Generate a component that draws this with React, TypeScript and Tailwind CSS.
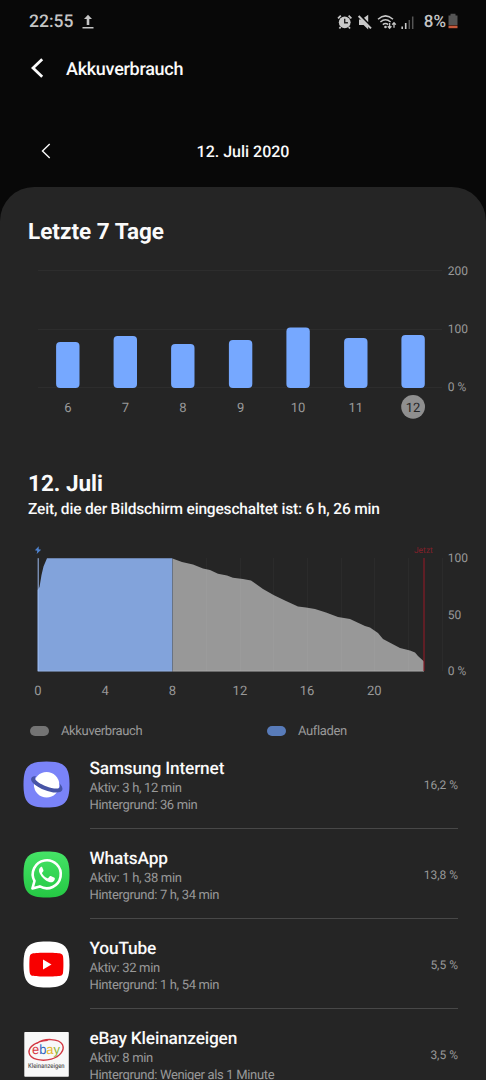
import type { ReactNode } from "react";

const DAYS = [
  { day: "6", x: 67.8, top: 342 },
  { day: "7", x: 125.3, top: 336 },
  { day: "8", x: 182.8, top: 344 },
  { day: "9", x: 240.6, top: 340 },
  { day: "10", x: 298.1, top: 327.5 },
  { day: "11", x: 355.8, top: 338 },
  { day: "12", x: 413.1, top: 335, active: true },
];

function StatusIcons() {
  return (
    <svg width="78" height="20" viewBox="0 0 78 20" fill="none" stroke="#c9c9c9">
      {/* alarm */}
      <circle cx="7.7" cy="10.3" r="5.9" fill="#c9c9c9" stroke="none" />
      <path d="M1 6.4 3.8 3.6M14.4 6.4 11.6 3.6M3.6 15l-1.2 1.6M11.8 15l1.2 1.6" strokeWidth="1.7" />
      <path d="M7.7 6.7v4h3.2" stroke="#222" strokeWidth="1.4" />
      {/* muted */}
      <path d="M22 7.6h2.8l1.4 1.3 5 5.2v3.5L26.6 13H22ZM27 5.8l4.2-3v7.4Z" fill="#c9c9c9" stroke="none" />
      <path d="m21.6 4 12.4 12.4" strokeWidth="2" />
      {/* wifi */}
      <path d="M41 7.2q7.5-6.6 15 0M43.4 10q5.1-4.4 10.2 0M45.8 12.6q2.7-2.2 5.4 0" strokeWidth="1.5" />
      <circle cx="48.5" cy="15" r="1.3" fill="#c9c9c9" stroke="none" />
      <path d="M52.6 11v5M50.8 14.3l1.8 2 1.8-2M57 15.8v-5M55.2 12.6l1.8-2 1.8 2" strokeWidth="1.3" />
      {/* signal */}
      <path d="M65.2 14.6v2.4M68.7 11v6" strokeWidth="1.6" />
      <path d="M72.3 8v9M75.7 4.4V17" stroke="#555" strokeWidth="1.5" />
    </svg>
  );
}

function WeekChart() {
  return (
    <svg className="block" width="486" height="165" viewBox="0 260 486 165" fontFamily="Roboto, sans-serif">
      <path d="M38 270.5h404M38 329.5h404M38 387.5h404" stroke="#2d2d2d" />
      {DAYS.map((d) => (
        <g key={d.day}>
          <rect x={d.x - 11.7} y={d.top} width="23.4" height={388 - d.top} rx="4" fill="#76a8ff" />
          {d.active && <circle cx={d.x} cy="406.8" r="11.9" fill="#8f8f8f" />}
          <text x={d.x} y="411.8" textAnchor="middle" fontSize="13" fill={d.active ? "#252525" : "#999"}>
            {d.day}
          </text>
        </g>
      ))}
      <g fontSize="12" fill="#999">
        <text x="447.7" y="274.8">200</text>
        <text x="447.7" y="333.2">100</text>
        <text x="447.7" y="391.3">0 %</text>
      </g>
    </svg>
  );
}

function DayChart() {
  return (
    <svg className="block" width="486" height="165" viewBox="0 540 486 165" fontFamily="Roboto, sans-serif">
      <path
        d="M172.5 558.5 182 562 193 564.5 203 568.5 210 570 218 573.7 227 575.5 233 577.7 243 579 251 580.5 256 584 263 589 274 595.3 286 601 298 606.5 306 607.5 315 609 326 612.5 338 617 350 619 358 622.7 365 626 370 627.5 378 633 380.5 636 383 639 391 643.3 400 648 410 650.5 415 652.5 418 656 424 661.5V671.5H172.5Z"
        fill="#989898"
      />
      <path d="M37.7 671.5V590L39.5 587 41.5 575 43.5 566.5 47 558.2H172.3V671.5Z" fill="#82a3db" />
      <path d="M38.2 558.2V671" stroke="#9dbcf0" />
      <path d="M206.5 558v113M240.5 558v113M273.5 558v113M307.5 558v113M341.5 558v113M374.5 558v113M408.5 558v113M442.5 558v113" stroke="#fff" strokeOpacity="0.03" />
      <path d="M37.7 671H424" stroke="#fff" strokeOpacity="0.15" />
      <path d="M424 558v113" stroke="#871c27" strokeWidth="1.2" />
      <path d="m38.8 546.3-3.9 4 2.4.5-.6 3.3 4.4-4.4-2.5-.5Z" fill="#4f83cf" />
      <text x="423.4" y="552.8" textAnchor="middle" fontSize="8.5" fill="#84202a">Jetzt</text>
      <g fontSize="13" fill="#999" textAnchor="middle">
        <text x="37.8" y="695.3">0</text>
        <text x="105.2" y="695.3">4</text>
        <text x="172.3" y="695.3">8</text>
        <text x="239.9" y="695.3">12</text>
        <text x="307" y="695.3">16</text>
        <text x="374.3" y="695.3">20</text>
      </g>
      <g fontSize="12" fill="#999">
        <text x="447.7" y="562.3">100</text>
        <text x="447.7" y="618.5">50</text>
        <text x="447.7" y="674.7">0 %</text>
      </g>
    </svg>
  );
}

const SQUIRCLE = "M23.5.5C41.5.5 46.5 5.5 46.5 23.5S41.5 46.5 23.5 46.5.5 41.5.5 23.5 5.5.5 23.5.5Z";

function SamsungIcon() {
  return (
    <svg width="47" height="47" viewBox="0 0 47 47">
      <path d={SQUIRCLE} fill="#7a83f8" />
      <circle cx="23.6" cy="23.7" r="12.7" fill="#fff" />
      <path d="M13.2 15C8 15 6.6 18.4 9.8 21.8c4.3 4.7 13.1 8.6 20.4 9.6 4.9.6 8.3-.1 9.1-2.3.7-2-.5-4.4-3-6.8.9 2.1 1.3 3.8-.2 4.7-2.2 1.2-8 .1-13.1-1.8-5.2-1.9-9.9-4.8-10.8-7.2-.4-1.2 0-2.2 1-3Z" fill="#4754a6" />
    </svg>
  );
}

function WhatsAppIcon() {
  return (
    <svg width="47" height="47" viewBox="0 0 47 47">
      <defs>
        <linearGradient id="wa" x1="0" y1="0" x2="0" y2="1">
          <stop offset="0" stopColor="#45e366" />
          <stop offset="1" stopColor="#25c844" />
        </linearGradient>
      </defs>
      <path d={SQUIRCLE} fill="url(#wa)" />
      <path d="M9.4 37.5 11.5 30A14 14 0 1 1 16.8 35.4Z" fill="none" stroke="#fff" strokeWidth="2.6" strokeLinejoin="round" />
      <path d="M17.8 16c-2 1.4-2.4 3.9-1 6.6 2.2 4.2 5.4 7.1 9.3 8.4 2.6.9 5.2-.3 5.7-2.8.2-1-.1-1.3-.8-1.6l-3.2-1.5c-.6-.3-.9-.1-1.3.4l-1.2 1.4c-.4.4-.7.4-1.3.1-2.1-1-3.7-2.4-4.8-4.3-.3-.5-.2-.8.1-1.2l1-1.3c.3-.4.3-.7.1-1.2l-1.3-3c-.3-.5-.8-.5-1.3 0Z" fill="#fff" />
    </svg>
  );
}

function YouTubeIcon() {
  return (
    <svg width="47" height="47" viewBox="0 0 47 47">
      <path d={SQUIRCLE} fill="#fff" />
      <path d="M23.4 11.7c6 0 11.8.2 14 .8 1.6.4 2.3 1.2 2.6 2.8.6 3.4.6 13.3 0 16.6-.3 1.6-1 2.4-2.6 2.8-4.2 1-23.8 1-28 0-1.6-.4-2.3-1.2-2.6-2.8-.6-3.3-.6-13.2 0-16.6.3-1.6 1-2.4 2.6-2.8 2.2-.6 8-.8 14-.8Z" fill="#f80000" />
      <path d="m20 18.6 8.5 4.9-8.5 4.9Z" fill="#fff" />
    </svg>
  );
}

function EbayIcon() {
  return (
    <svg width="47" height="47" viewBox="0 0 47 47">
      <rect x="1.3" y="1" width="44.5" height="44.7" rx=".8" fill="#f8f8f8" />
      <path d="M14 12.3C21 7 36 7.2 39.5 13.7c2.4 5.2-2.2 12-11.2 14.4-9.8 2.6-21.2.2-22.2-6.2C5.1 15.5 13.4 10.2 24.5 9.4" fill="none" stroke="#d33843" strokeWidth="1.4" strokeLinecap="round" />
      <text x="9" y="23.4" fontFamily="'Liberation Sans', sans-serif" fontSize="13.5" textLength="28" lengthAdjust="spacingAndGlyphs">
        <tspan fill="#d93640">e</tspan>
        <tspan fill="#3165be">b</tspan>
        <tspan fill="#e8b52c">a</tspan>
        <tspan fill="#8eb532">y</tspan>
      </text>
      <text x="5" y="37.4" fontFamily="Roboto, sans-serif" fontSize="6.7" fontWeight="500" fill="#555" textLength="36.6" lengthAdjust="spacingAndGlyphs">
        Kleinanzeigen
      </text>
    </svg>
  );
}

type AppUsage = {
  name: string;
  active: string;
  background: string;
  percent: string;
  icon: ReactNode;
};

const APPS: AppUsage[] = [
  { name: "Samsung Internet", active: "3 h, 12 min", background: "36 min", percent: "16,2 %", icon: <SamsungIcon /> },
  { name: "WhatsApp", active: "1 h, 38 min", background: "7 h, 34 min", percent: "13,8 %", icon: <WhatsAppIcon /> },
  { name: "YouTube", active: "32 min", background: "1 h, 54 min", percent: "5,5 %", icon: <YouTubeIcon /> },
  { name: "eBay Kleinanzeigen", active: "8 min", background: "Weniger als 1 Minute", percent: "3,5 %", icon: <EbayIcon /> },
];

function UsageRow({ app }: { app: AppUsage }) {
  return (
    <div className="flex h-[90px] shrink-0 pl-[23px] pr-7">
      <div className="pt-[21.5px]">{app.icon}</div>
      <div className="ml-[19.5px] flex flex-1 items-start justify-between border-b border-[#484848]">
        <div className="pt-[19px]">
          <div className="text-[17.3px] leading-[23px] font-medium tracking-[-0.16px] text-[#fafafa]">{app.name}</div>
          <div className="text-[13px] leading-[16.5px] tracking-[-0.34px] text-[#999]">Aktiv: {app.active}</div>
          <div className="text-[13px] leading-[16.5px] tracking-[-0.34px] text-[#999]">Hintergrund: {app.background}</div>
        </div>
        <div className="pt-[38px] text-[12px] leading-[16px] text-[#999]">{app.percent}</div>
      </div>
    </div>
  );
}

export default function App() {
  return (
    <div className="flex h-[1080px] w-[486px] flex-col overflow-hidden bg-[#080808] font-['Roboto',sans-serif] text-[#fafafa] [text-rendering:geometricPrecision]">
      <div className="flex h-[43px] shrink-0 items-center pl-[29px] pr-[28px] text-[#c4c4c4]">
        <span className="pt-[2px] text-[17.5px] font-medium">22:55</span>
        <svg className="ml-[9px]" width="12" height="16" viewBox="0 0 12 16" fill="#c4c4c4">
          <path d="M6 .8 10 5H7.3v6H4.7V5H2ZM.5 13h11v1.4H.5Z" />
        </svg>
        <div className="ml-auto flex items-center">
          <StatusIcons />
          <span className="ml-[9px] pt-[2px] text-[17px] font-medium">8%</span>
          <svg className="ml-[2px] mb-[2px]" width="10" height="16" viewBox="0 0 10 16">
            <path d="M.5 2.5h2V.8h5v1.7h2V12h-9Z" fill="#555" />
            <path d="M.5 12.6h9v2.6h-9Z" fill="#c85a3c" />
          </svg>
        </div>
      </div>

      <div className="flex h-[50px] shrink-0 items-center pl-[31px]">
        <svg width="13" height="20" viewBox="0 0 13 20" fill="none" stroke="#fafafa" strokeWidth="2.8">
          <path d="M11.2 1.3 2 10l9.2 8.7" />
        </svg>
        <h1 className="ml-[22px] pt-[2px] text-[18px] font-medium tracking-[-0.28px]">Akkuverbrauch</h1>
      </div>

      <div className="grid h-[94px] shrink-0 grid-cols-[60px_1fr_60px] items-center pt-[23px]">
        <svg className="ml-[41px] mb-[2px]" width="10" height="16" viewBox="0 0 10 16" fill="none" stroke="#fafafa" strokeWidth="1.4">
          <path d="M8.7 1 1.5 8l7.2 7" />
        </svg>
        <h2 className="text-center text-[16px] font-medium">12. Juli 2020</h2>
      </div>

      <main className="flex flex-1 flex-col overflow-hidden rounded-t-[34px] bg-[#252525]">
        <h2 className="h-[73px] shrink-0 pt-[31px] pl-[28px] text-[22.5px] leading-[28px] font-bold">Letzte 7 Tage</h2>
        <div className="shrink-0">
          <WeekChart />
        </div>

        <div className="h-[115px] shrink-0 pt-[45px] pl-[28px]">
          <h2 className="text-[22.5px] leading-[28px] font-bold">12. Juli</h2>
          <p className="text-[15.5px] leading-[22px] font-medium tracking-[-0.18px]">Zeit, die der Bildschirm eingeschaltet ist: 6 h, 26 min</p>
        </div>
        <div className="shrink-0">
          <DayChart />
        </div>

        <div className="flex h-[34px] shrink-0 items-center pt-[18px] pl-[30px] text-[13px] leading-[16px] tracking-[-0.36px] text-[#999]">
          <div className="flex w-[237px] items-center gap-[12px]">
            <span className="h-[10px] w-[19px] rounded-full bg-[#747474]" />
            <span className="pt-[2px]">Akkuverbrauch</span>
          </div>
          <div className="flex items-center gap-[12px]">
            <span className="h-[10px] w-[19px] rounded-full bg-[#587bb9]" />
            <span className="pt-[2px]">Aufladen</span>
          </div>
        </div>

        {APPS.map((app) => (
          <UsageRow key={app.name} app={app} />
        ))}
      </main>
    </div>
  );
}
